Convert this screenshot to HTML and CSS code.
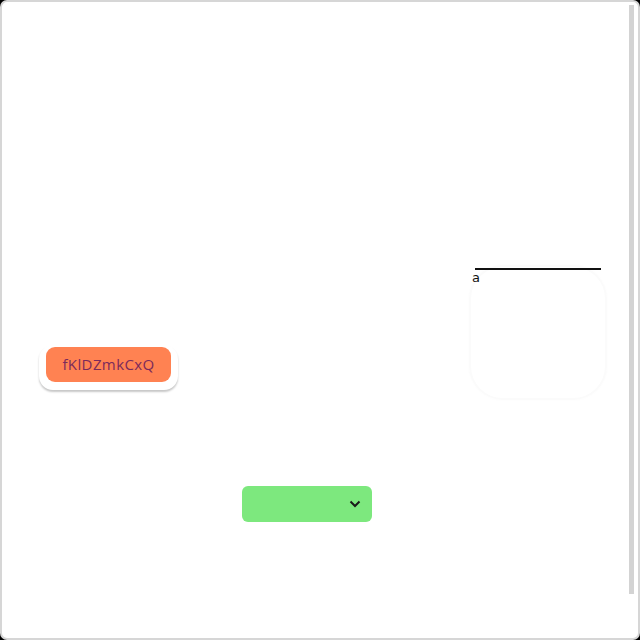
FILE: index.html
```html
<!DOCTYPE html>
<html lang="en">
<head>
    <meta charset="UTF-8">
    <title>Widgets</title>
    <link rel="stylesheet" href="styles.css">
</head>
<body>
    <div class="frame">
        <div class="content">
            <div class="top-row">
                <div class="btn-wrap">
                    <button class="btn" type="button">fKlDZmkCxQ</button>
                </div>
                <div class="card">
                    <div class="rule"></div>
                    <span class="label">a</span>
                </div>
            </div>
            <div class="select-row">
                <div class="select">
                    <svg width="12" height="8" viewBox="0 0 12 8">
                        <path d="M1.5 1.5 L6 6 L10.5 1.5" fill="none" stroke="#1a1a1a" stroke-width="2"/>
                    </svg>
                </div>
            </div>
        </div>
        <div class="scrollbar"></div>
    </div>
</body>
</html>
```
FILE: styles.css
```css
html {
    background-color: #000;
}
body {
    margin: 0;
    font-family: "DejaVu Sans", sans-serif;
}
.frame {
    width: 640px;
    height: 640px;
    box-sizing: border-box;
    background-color: #fff;
    border: 2px solid #d6d6d6;
    border-radius: 7px;
    display: flex;
    overflow: hidden;
}
.content {
    flex: 1;
    padding-top: 263px;
}
.top-row {
    display: flex;
    justify-content: space-between;
    align-items: flex-start;
    padding: 0 22px 0 37px;
}
.btn-wrap {
    margin-top: 80px;
    width: 139px;
    height: 45px;
    box-sizing: border-box;
    padding: 2px 0 0 7px;
    border-radius: 14px;
    background-color: #fff;
    box-shadow: 0 2px 2px rgba(0, 0, 0, 0.22);
}
.btn {
    width: 125px;
    height: 35px;
    border: none;
    border-radius: 9px;
    background-color: #ff8252;
    color: #7b2a5c;
    font-family: "Open Sans", sans-serif;
    font-size: 15px;
    letter-spacing: 0.4px;
    padding: 0 0 1px;
}
.card {
    position: relative;
    width: 138px;
    height: 135px;
    box-sizing: border-box;
    border: 2px solid #fbfbfb;
    border-radius: 34px;
    box-shadow: 0 0 3px rgba(0, 0, 0, 0.02);
}
.rule {
    position: absolute;
    top: 1px;
    left: 4px;
    width: 126px;
    height: 2px;
    background-color: #111;
}
.label {
    position: absolute;
    top: 3px;
    left: 1px;
    font-size: 13px;
    color: #111;
}
.select-row {
    padding: 86px 0 0 240px;
}
.select {
    width: 130px;
    height: 36px;
    box-sizing: border-box;
    border-radius: 6px;
    background-color: #7de87e;
    display: flex;
    align-items: center;
    justify-content: flex-end;
    padding-right: 11px;
}
.scrollbar {
    width: 5px;
    margin: 3px 4px 44px 0;
    background-color: #d3d3d3;
}
```
